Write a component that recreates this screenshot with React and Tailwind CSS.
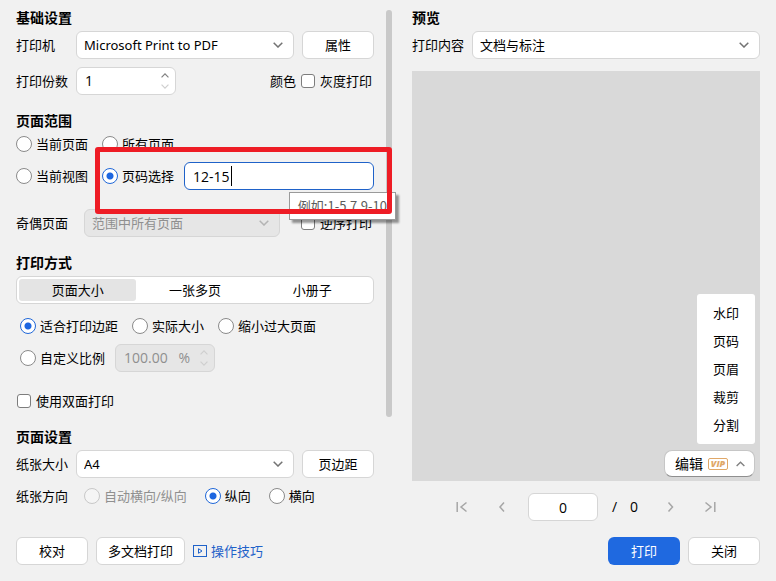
import React, { useState } from "react";
import clsx from "clsx";

const Chevron = ({ up = false, className }) => (
  <svg
    viewBox="0 0 10 6"
    fill="none"
    stroke="currentColor"
    strokeWidth="1.5"
    className={clsx("shrink-0", className)}
  >
    <path d={up ? "M0.7 5.3 5 1l4.3 4.3" : "M0.7 0.7 5 5l4.3-4.3"} />
  </svg>
);

const PushButton = ({ children, className }) => (
  <button
    type="button"
    className={clsx(
      "h-7 min-w-18 px-[11px] rounded-md border border-[#d6d6d6] bg-white text-center whitespace-nowrap",
      className
    )}
  >
    {children}
  </button>
);

const SelectBox = ({ label, options, disabled, className }) => (
  <div className={clsx("relative", className)}>
    <select
      aria-label={label}
      disabled={disabled}
      className={clsx(
        "block w-full h-7 appearance-none rounded-md border border-[#d6d6d6] bg-white pl-[7px] pr-7 outline-none",
        "font-['Noto_Sans','Noto_Sans_CJK_SC',sans-serif]",
        "disabled:bg-[#e6e6e6] disabled:text-[#8f8f8f] disabled:opacity-100"
      )}
    >
      {options.map((o) => (
        <option key={o}>{o}</option>
      ))}
    </select>
    <Chevron
      className={clsx(
        "absolute right-[11px] top-[11px] w-[10px] h-[6px] pointer-events-none",
        disabled ? "text-[#b4b4b4]" : "text-[#737373]"
      )}
    />
  </div>
);

const SpinBox = ({ label, value, suffix, disabled }) => (
  <div
    className={clsx(
      "w-25 h-7 flex items-center rounded-md border border-[#d6d6d6] pl-2 pr-[6px] text-sm",
      disabled ? "bg-[#e6e6e6] text-[#8f8f8f]" : "bg-white"
    )}
  >
    <input
      aria-label={label}
      type="text"
      inputMode="decimal"
      defaultValue={value}
      disabled={disabled}
      className="min-w-0 flex-1 bg-transparent outline-none"
    />
    {suffix && <span className="mr-[10px]">{suffix}</span>}
    <div className="flex flex-col gap-[6px]">
      <button type="button" aria-label={label + " +"} disabled={disabled}>
        <Chevron
          up
          className={clsx(
            "block w-2 h-[5px]",
            disabled ? "text-[#cfcfcf]" : "text-[#808080]"
          )}
        />
      </button>
      <button type="button" aria-label={label + " -"} disabled={disabled}>
        <Chevron className="block w-2 h-[5px] text-[#cfcfcf]" />
      </button>
    </div>
  </div>
);

const Radio = ({ name, label, checked, disabled }) => (
  <label
    className={clsx(
      "h-5 flex items-center gap-1 whitespace-nowrap",
      disabled && "text-[#8f8f8f]"
    )}
  >
    <input
      type="radio"
      name={name}
      defaultChecked={checked}
      disabled={disabled}
      className="size-4 shrink-0 appearance-none rounded-full border border-[#8a8a8a] bg-white checked:border-[#1f67d8] checked:bg-[radial-gradient(circle,#1d66e0_3px,#ffffff_4px)] disabled:border-[#c8c8c8] disabled:bg-[#f5f5f5]"
    />
    {label}
  </label>
);

const Checkbox = ({ label }) => (
  <label className="h-5 flex items-center gap-[5px] whitespace-nowrap">
    <input
      type="checkbox"
      className="size-[14px] shrink-0 appearance-none rounded-[3px] border border-[#7d7d7d] bg-white checked:bg-[#1d66e0]"
    />
    {label}
  </label>
);

const Section = ({ title, children }) => (
  <section>
    <h2 className="h-5 mb-[3px] text-sm leading-5 font-bold">{title}</h2>
    {children}
  </section>
);

const RowLabel = ({ children }) => (
  <span className="w-13 shrink-0 whitespace-nowrap">{children}</span>
);

const LAYOUTS = ["页面大小", "一张多页", "小册子"];
const EDIT_ITEMS = ["水印", "页码", "页眉", "裁剪", "分割"];

const SettingsPanel = () => {
  const [layout, setLayout] = useState(LAYOUTS[0]);

  return (
    <div className="flex-1 min-w-0 flex flex-col gap-4">
      <Section title="基础设置">
        <div className="flex items-center gap-2 mb-2">
          <RowLabel>打印机</RowLabel>
          <SelectBox
            label="打印机"
            options={["Microsoft Print to PDF"]}
            className="flex-1"
          />
          <PushButton>属性</PushButton>
        </div>
        <div className="flex items-center gap-2">
          <RowLabel>打印份数</RowLabel>
          <SpinBox label="打印份数" value="1" />
          <div className="ml-auto pr-[2px] flex items-center gap-[5px]">
            <span>颜色</span>
            <Checkbox label="灰度打印" />
          </div>
        </div>
      </Section>

      <Section title="页面范围">
        <div className="flex gap-[14px] mb-2">
          <Radio name="range" label="当前页面" />
          <Radio name="range" label="所有页面" />
        </div>
        <div className="relative flex items-center gap-[14px] mb-[19px]">
          <Radio name="range" label="当前视图" />
          <div className="flex-1 flex items-center gap-[10px]">
            <Radio name="range" label="页码选择" checked />
            <div className="relative flex-1">
              <input
                aria-label="页码"
                type="text"
                defaultValue="12-15"
                className="block w-full h-7 rounded-md border border-[#1f62c9] bg-white px-2 text-sm outline-none"
              />
              <span className="absolute left-[47px] top-1 w-px h-5 bg-black"></span>
            </div>
          </div>
          <div
            role="tooltip"
            className="absolute z-10 -right-[22px] top-[30px] h-7 px-2 border border-[#9a9a9a] bg-white text-[#5c5c5c] leading-[26px] font-['Noto_Sans_CJK_SC',sans-serif] whitespace-nowrap shadow-[3px_3px_2px_rgba(0,0,0,0.4)]"
          >
            例如:1-5,7,9-10
          </div>
          <div className="absolute z-20 left-[79px] -right-[18px] -top-[15px] h-[67px] rounded-[3px] border-5 border-[#ee1c25] pointer-events-none"></div>
        </div>
        <div className="flex items-center gap-4">
          <RowLabel>奇偶页面</RowLabel>
          <SelectBox
            label="奇偶页面"
            options={["范围中所有页面"]}
            disabled
            className="flex-1"
          />
          <div className="pl-[5px] pr-[2px]">
            <Checkbox label="逆序打印" />
          </div>
        </div>
      </Section>

      <Section title="打印方式">
        <div className="h-7 p-[2px] mb-3 flex rounded-md border border-[#d6d6d6] bg-white">
          {LAYOUTS.map((name) => (
            <button
              key={name}
              type="button"
              onClick={() => setLayout(name)}
              className={clsx(
                "flex-1 rounded-[3px]",
                name === layout && "bg-[#e4e4e4]"
              )}
            >
              {name}
            </button>
          ))}
        </div>
        <div className="pl-1 flex gap-[14px] mb-2">
          <Radio name="scale" label="适合打印边距" checked />
          <Radio name="scale" label="实际大小" />
          <Radio name="scale" label="缩小过大页面" />
        </div>
        <div className="pl-1 flex items-center gap-[10px] mb-[19px]">
          <Radio name="scale" label="自定义比例" />
          <SpinBox label="自定义比例" value="100.00" suffix="%" disabled />
        </div>
        <div className="pl-px">
          <Checkbox label="使用双面打印" />
        </div>
      </Section>

      <Section title="页面设置">
        <div className="flex items-center gap-2 mb-2">
          <RowLabel>纸张大小</RowLabel>
          <SelectBox label="纸张大小" options={["A4"]} className="flex-1" />
          <PushButton>页边距</PushButton>
        </div>
        <div className="flex items-center gap-4">
          <RowLabel>纸张方向</RowLabel>
          <div className="flex gap-[18px]">
            <Radio name="direction" label="自动横向/纵向" disabled />
            <Radio name="direction" label="纵向" checked />
            <Radio name="direction" label="横向" />
          </div>
        </div>
      </Section>
    </div>
  );
};

const PagerButton = ({ label, d }) => (
  <button
    type="button"
    aria-label={label}
    className="size-6 flex items-center justify-center text-[#a6a6a6]"
  >
    <svg
      viewBox="0 0 12 12"
      fill="none"
      stroke="currentColor"
      strokeWidth="1.5"
      className="size-3"
    >
      <path d={d} />
    </svg>
  </button>
);

const PreviewPanel = () => (
  <div className="flex-1 min-w-0 flex flex-col">
    <h2 className="h-5 mb-[3px] text-sm leading-5 font-bold">预览</h2>
    <div className="flex items-center gap-2 mb-3">
      <RowLabel>打印内容</RowLabel>
      <SelectBox label="打印内容" options={["文档与标注"]} className="flex-1" />
    </div>

    <div className="relative flex-1 bg-[#d9d9d9]">
      <div className="absolute right-[5px] bottom-1 flex flex-col items-end gap-[6px]">
        <div className="w-[58px] py-[5px] rounded-[3px] bg-white flex flex-col">
          {EDIT_ITEMS.map((item) => (
            <button key={item} type="button" className="h-7">
              {item}
            </button>
          ))}
        </div>
        <button
          type="button"
          className="h-[27px] pl-[10px] pr-[9px] flex items-center rounded-lg border border-[#c6c6c6] border-b-[#8f8f8f] bg-white text-sm"
        >
          <span>编辑</span>
          <span className="ml-[5px] w-5 h-3 rounded-[2px] border border-[#e0a868] text-[9px] leading-[10px] font-extrabold italic text-[#e0a868]">
            VIP
          </span>
          <Chevron up className="ml-2 w-[9px] h-[6px] text-[#808080]" />
        </button>
      </div>
    </div>

    <div className="mt-3 flex items-center justify-center gap-[14px] text-sm">
      <div className="flex gap-4">
        <PagerButton label="首页" d="M1.2 1v10M10.5 1.5 5 6l5.5 4.5" />
        <PagerButton label="上一页" d="M8 1.5 4 6l4 4.5" />
      </div>
      <input
        aria-label="当前页"
        type="text"
        defaultValue="0"
        className="w-[70px] h-7 px-2 rounded-md border border-[#d6d6d6] bg-white text-center outline-none"
      />
      <div className="w-[26px] flex justify-between">
        <span>/</span>
        <span>0</span>
      </div>
      <div className="ml-[6px] flex gap-4">
        <PagerButton label="下一页" d="M4.5 1.5l4 4.5-4 4.5" />
        <PagerButton label="末页" d="M10.8 1v10M1.5 1.5 7 6l-5.5 4.5" />
      </div>
    </div>
  </div>
);

const App = () => {
  return (
    <div className="min-h-screen px-4 pt-2 pb-4 flex flex-col gap-4 bg-[#f1f1f1] text-black text-[13px] leading-5 font-['Open_Sans','Noto_Sans_CJK_SC',sans-serif]">
      <main className="flex-1 flex gap-5">
        <div className="w-94 shrink-0 flex gap-3">
          <SettingsPanel />
          <div className="w-[6px] mt-[2px] h-[407px] rounded-full bg-[#c9c9c9]"></div>
        </div>
        <PreviewPanel />
      </main>

      <footer className="flex items-center gap-2">
        <PushButton>校对</PushButton>
        <PushButton>多文档打印</PushButton>
        <a href="#tips" className="flex items-center gap-1 text-[#1f62c9]">
          <svg
            viewBox="0 0 14 12"
            fill="none"
            stroke="currentColor"
            className="w-[14px] h-3"
          >
            <rect x="0.5" y="0.5" width="13" height="11" />
            <path d="M5.5 3.7v4.6L9 6z" />
          </svg>
          操作技巧
        </a>
        <button
          type="button"
          className="ml-auto h-7 w-18 rounded-md bg-[#1f69e0] text-white"
        >
          打印
        </button>
        <PushButton>关闭</PushButton>
      </footer>
    </div>
  );
};

export default App;
